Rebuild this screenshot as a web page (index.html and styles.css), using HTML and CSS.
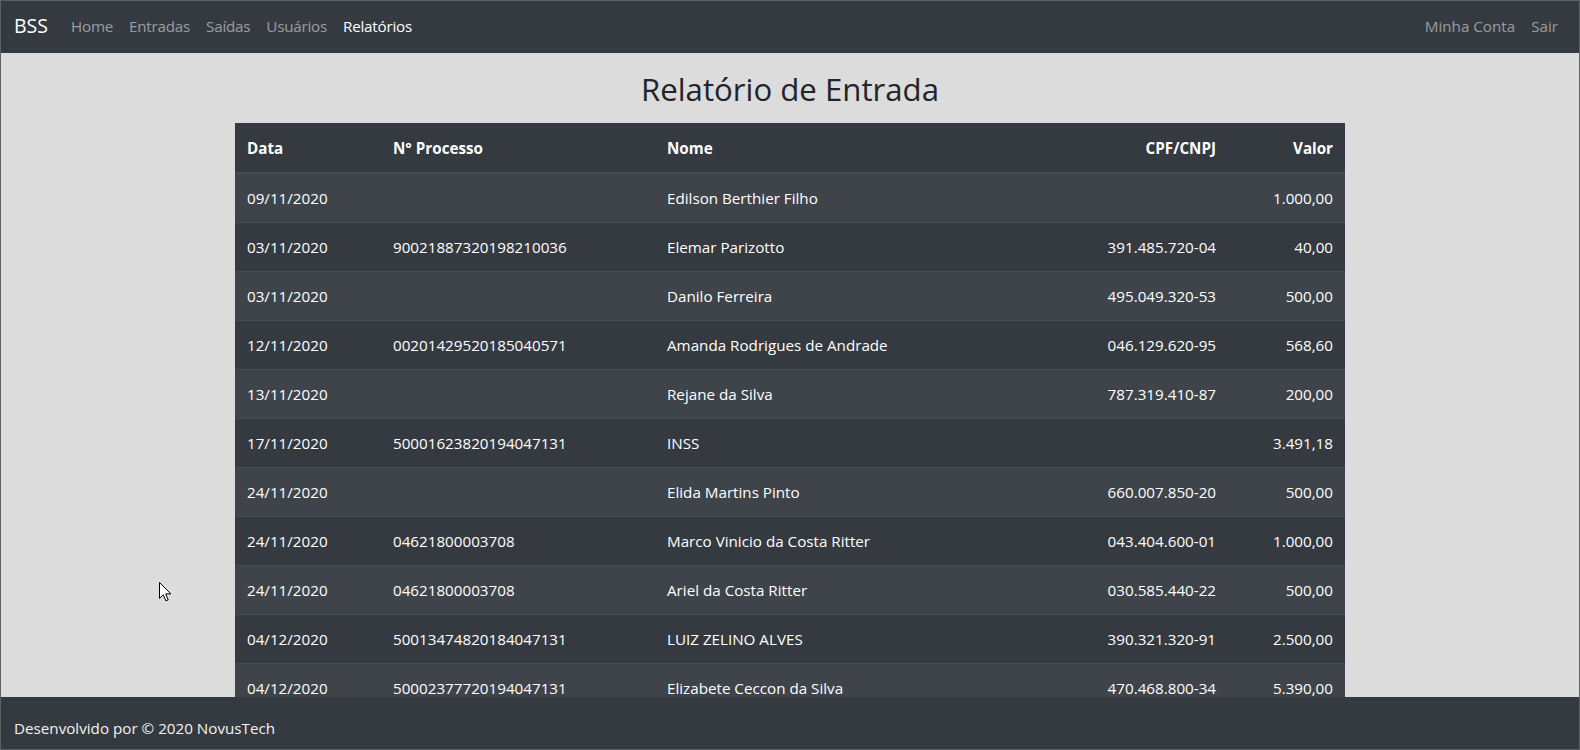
FILE: index.html
```html
<!DOCTYPE html>
<html lang="pt-BR">
<head>
<meta charset="utf-8">
<title>BSS - Relatório de Entrada</title>
<link rel="stylesheet" href="styles.css">
</head>
<body>
<div class="window">
  <nav class="navbar">
    <a class="brand" href="#">BSS</a>
    <ul class="nav">
      <li><a class="nav-link" href="#">Home</a></li>
      <li><a class="nav-link" href="#">Entradas</a></li>
      <li><a class="nav-link" href="#">Saídas</a></li>
      <li><a class="nav-link" href="#">Usuários</a></li>
      <li><a class="nav-link active" href="#">Relatórios</a></li>
    </ul>
    <ul class="nav nav-right">
      <li><a class="nav-link" href="#">Minha Conta</a></li>
      <li><a class="nav-link" href="#">Sair</a></li>
    </ul>
  </nav>

  <main class="main">
    <h1 class="title">Relatório de Entrada</h1>
    <table class="report">
      <colgroup>
        <col class="c-data"><col class="c-proc"><col class="c-nome"><col class="c-cpf"><col class="c-valor">
      </colgroup>
      <thead>
        <tr><th>Data</th><th>N° Processo</th><th>Nome</th><th class="r">CPF/CNPJ</th><th class="r">Valor</th></tr>
      </thead>
      <tbody>
        <tr><td>09/11/2020</td><td></td><td>Edilson Berthier Filho</td><td class="r"></td><td class="r">1.000,00</td></tr>
        <tr><td>03/11/2020</td><td>90021887320198210036</td><td>Elemar Parizotto</td><td class="r">391.485.720-04</td><td class="r">40,00</td></tr>
        <tr><td>03/11/2020</td><td></td><td>Danilo Ferreira</td><td class="r">495.049.320-53</td><td class="r">500,00</td></tr>
        <tr><td>12/11/2020</td><td>00201429520185040571</td><td>Amanda Rodrigues de Andrade</td><td class="r">046.129.620-95</td><td class="r">568,60</td></tr>
        <tr><td>13/11/2020</td><td></td><td>Rejane da Silva</td><td class="r">787.319.410-87</td><td class="r">200,00</td></tr>
        <tr><td>17/11/2020</td><td>50001623820194047131</td><td>INSS</td><td class="r"></td><td class="r">3.491,18</td></tr>
        <tr><td>24/11/2020</td><td></td><td>Elida Martins Pinto</td><td class="r">660.007.850-20</td><td class="r">500,00</td></tr>
        <tr><td>24/11/2020</td><td>04621800003708</td><td>Marco Vinicio da Costa Ritter</td><td class="r">043.404.600-01</td><td class="r">1.000,00</td></tr>
        <tr><td>24/11/2020</td><td>04621800003708</td><td>Ariel da Costa Ritter</td><td class="r">030.585.440-22</td><td class="r">500,00</td></tr>
        <tr><td>04/12/2020</td><td>50013474820184047131</td><td>LUIZ ZELINO ALVES</td><td class="r">390.321.320-91</td><td class="r">2.500,00</td></tr>
        <tr><td>04/12/2020</td><td>50002377720194047131</td><td>Elizabete Ceccon da Silva</td><td class="r">470.468.800-34</td><td class="r">5.390,00</td></tr>
      </tbody>
    </table>
    <svg class="cursor" width="13" height="21" viewBox="0 0 13 21" aria-hidden="true">
      <path d="M0.5 0.5 L0.5 16.5 L4.3 12.8 L6.8 18.8 L9.2 17.8 L6.7 11.9 L11.8 11.9 Z" fill="#fff" stroke="#000" stroke-width="1" stroke-linejoin="miter"/>
    </svg>
  </main>

  <footer class="footer">Desenvolvido por © 2020 NovusTech</footer>
</div>
</body>
</html>
```

FILE: styles.css
```css
* { box-sizing: border-box; }

html, body {
  margin: 0;
  height: 100%;
}

body {
  font-family: "Open Sans", "Noto Sans", "Liberation Sans", sans-serif;
  font-size: 15.2px;
  line-height: 24px;
  color: #212529;
  background: #dcdcdc;
}

.window {
  height: 100vh;
  display: flex;
  flex-direction: column;
  border: 1px solid #5d6166;
  overflow: hidden;
}

.navbar {
  flex: 0 0 52px;
  display: flex;
  align-items: center;
  background: #343a40;
  padding: 0 13px 3px 13px;
}

.brand {
  color: #fff;
  font-size: 19.5px;
  line-height: 30px;
  text-decoration: none;
  margin-right: 15px;
}

.nav {
  display: flex;
  list-style: none;
  margin: 0;
  padding: 0;
}

.nav-right { margin-left: auto; }

.nav-link {
  display: block;
  padding: 0 8px;
  color: rgba(255, 255, 255, 0.5);
  text-decoration: none;
  letter-spacing: -0.22px;
}

.nav-right .nav-link { letter-spacing: 0; }

.nav-link.active { color: #fff; }

.main {
  flex: 1 1 auto;
  overflow: hidden;
  position: relative;
  background: #dcdcdc;
  padding-top: 18px;
}

.title {
  margin: 0 0 15px;
  text-align: center;
  font-size: 31.2px;
  font-weight: 500;
  line-height: 1.2;
  color: #212529;
}

.report {
  width: 1110px;
  margin: 0 auto;
  border-collapse: collapse;
  table-layout: fixed;
  background: #343a40;
  color: #fff;
}

.c-data { width: 146px; }
.c-proc { width: 274px; }
.c-nome { width: 400px; }
.c-cpf { width: 173px; }
.c-valor { width: 117px; }

.report th {
  text-align: left;
  font-weight: 700;
  padding: 13px 12px 12px;
  border-bottom: 2px solid #454d55;
  vertical-align: bottom;
}

.report td {
  padding: 12px;
  border-top: 1px solid #454d55;
  white-space: nowrap;
}

.report thead + tbody tr:first-child td { border-top: 0; height: 48px; }

.report tbody tr:nth-child(odd) { background: #3e444a; }

.report .r { text-align: right; }

.cursor {
  position: absolute;
  left: 158px;
  top: 529px;
}

.footer {
  flex: 0 0 52px;
  background: #343a40;
  color: #f2f2f2;
  padding: 21px 13px 0;
  line-height: 20px;
}
```
